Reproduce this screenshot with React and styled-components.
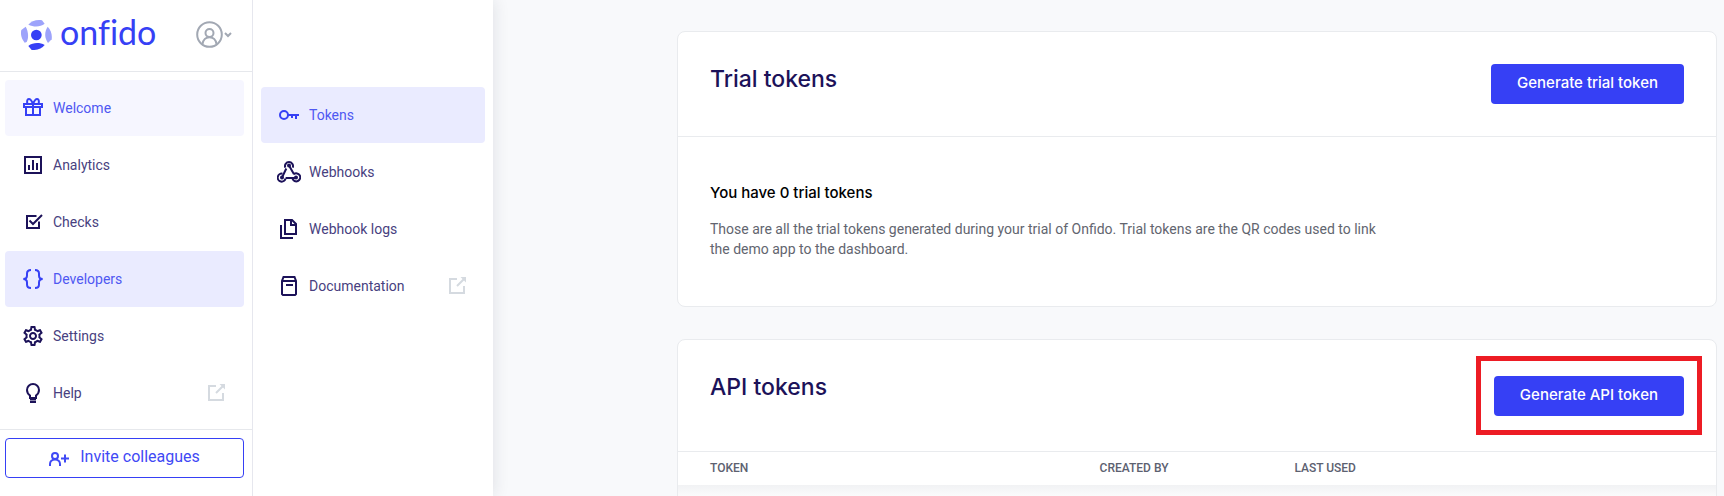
import React from 'react';
import styled, { createGlobalStyle, css } from 'styled-components';
import { MdOutlineSettings } from 'react-icons/md';

const GlobalStyle = createGlobalStyle`
  * {
    box-sizing: border-box;
  }

  body {
    margin: 0;
    background: #f8f9fb;
    color: #1c1259;
    font-family: Roboto, 'Liberation Sans', sans-serif;
    font-size: 14px;
  }
`;

const headingFont = css`
  font-family: Inter, 'Liberation Sans', sans-serif;
  font-weight: 500;
`;

const Layout = styled.div`
  display: flex;
  height: 100vh;
  overflow: hidden;
`;

const Sidebar = styled.aside`
  display: flex;
  flex-direction: column;
  flex: 0 0 253px;
  background: #fff;
  border-right: 1px solid #e6e7ee;
  z-index: 2;
`;

const SidebarTop = styled.header`
  display: flex;
  align-items: center;
  justify-content: space-between;
  height: 72px;
  padding: 0 20px 2px 21px;
  border-bottom: 1px solid #e6e8ec;
`;

const Brand = styled.a`
  display: flex;
  align-items: center;
  gap: 8px;
  color: #3640f5;
  text-decoration: none;
`;

const BrandName = styled.span`
  font-family: Lato, sans-serif;
  font-size: 34px;
  font-variant-ligatures: none;
  line-height: 40px;
  padding-bottom: 6px;
`;

const AccountButton = styled.button`
  display: flex;
  align-items: center;
  gap: 1px;
  padding: 0;
  border: 0;
  background: none;
  color: #a2a8b3;
  cursor: pointer;
`;

const Nav = styled.nav`
  display: flex;
  flex-direction: column;
  gap: 1px;
  padding: 8px 8px 8px 5px;
`;

const SubNav = styled(Nav)`
  flex: 0 0 240px;
  padding: 87px 8px 8px;
  background: #fff;
  box-shadow: 0 0 16px rgba(28, 30, 60, 0.12);
  z-index: 1;
`;

const NavLink = styled.a`
  display: flex;
  align-items: center;
  gap: 8px;
  height: 56px;
  padding: 0 15px 0 16px;
  border-radius: 4px;
  color: #483f80;
  text-decoration: none;

  svg {
    color: #1c1259;
  }

  ${({ $tone }) =>
    $tone &&
    css`
      color: #4f58f2;
      background: ${$tone === 'active' ? '#eaebff' : '#f6f6ff'};

      svg {
        color: #3640f5;
      }
    `}
`;

const NavLabel = styled.span`
  flex: 1;
  line-height: 20px;
`;

const Icon = styled.svg.attrs({
  width: 24,
  height: 24,
  viewBox: '0 0 24 24',
  fill: 'none',
  stroke: 'currentColor',
  strokeWidth: 2,
  'aria-hidden': true,
})`
  flex: none;

  ${NavLink} &.external {
    color: #d5dae0;
  }
`;

const SidebarBottom = styled.div`
  padding: 8px 8px 8px 5px;
  border-top: 1px solid #e6e8ec;
`;

const InviteButton = styled.button`
  display: flex;
  align-items: center;
  justify-content: center;
  gap: 11px;
  width: 100%;
  height: 40px;
  padding: 0 0 3px;
  border: 1px solid #3640f5;
  border-radius: 4px;
  background: #fff;
  color: #3f49f5;
  font: inherit;
  font-size: 16px;
  cursor: pointer;

  svg {
    margin-top: 4px;
  }
`;

const Main = styled.main`
  display: flex;
  flex: 1;
  flex-direction: column;
  gap: 32px;
  min-width: 0;
  padding: 31px 7px 0 184px;
`;

const Card = styled.section`
  flex: none;
  border: 1px solid #e9ebee;
  border-radius: 8px;
  background: #fff;
`;

const CardHead = styled.div`
  display: flex;
  align-items: flex-start;
  justify-content: space-between;
  padding: 32px;
  border-bottom: 1px solid #e9ebee;
`;

const CardTitle = styled.h2`
  ${headingFont}
  margin: 0;
  color: #1c1259;
  font-size: 23px;
  line-height: 30px;
`;

const PrimaryButton = styled.button`
  ${headingFont}
  height: 40px;
  padding: 0 26px 3px;
  border: 0;
  border-radius: 4px;
  background: #3640f5;
  color: #fff;
  font-size: 15px;
  cursor: pointer;
`;

const Highlight = styled.div`
  position: relative;
  padding: 4px 0 3px;

  &::after {
    content: '';
    position: absolute;
    inset: -16px -18px;
    border: 5px solid #ed1c24;
    pointer-events: none;
  }
`;

const CardBody = styled.div`
  padding: 44px 32px 47px;
`;

const BodyTitle = styled.h3`
  ${headingFont}
  margin: 0 0 14px;
  color: #000;
  font-size: 15px;
  line-height: 24px;
`;

const BodyText = styled.p`
  max-width: 680px;
  margin: 0;
  color: #62656f;
  line-height: 20px;
`;

const TableWrap = styled.div`
  padding: 0 32px;
`;

const Table = styled.table`
  width: 100%;
  table-layout: fixed;
  border-collapse: collapse;

  th {
    width: 20%;
    height: 33px;
    padding: 0 0 2px;
    color: #5c6170;
    font-size: 12px;
    font-weight: 500;
    text-align: left;
    text-transform: uppercase;
  }

  th:first-child,
  th:last-child {
    width: 40%;
  }
`;

const TableShade = styled.div`
  height: 160px;
  background: linear-gradient(#f1f2f4, #fff 16px);
`;

const LogoMark = () => (
  <svg width="31" height="30" viewBox="0 0 93 90" aria-hidden="true">
    <path d="M22 14C30 4 46-2 63 1L71 11C57 22 38 21 22 14Z" fill="#9da3fb" />
    <path d="M14 20C22 34 24 52 17 66L11 68C1 56-2 42 1 30Z" fill="#9da3fb" />
    <path d="M80 20C90 30 94 44 92 58L81 69C71 55 69 38 80 20Z" fill="#9da3fb" />
    <path d="M22 78C36 67 56 67 71 75C63 86 49 91 32 90Z" fill="#3640f5" />
    <circle cx="46" cy="45" r="16" fill="#3640f5" />
  </svg>
);

const AvatarIcon = () => (
  <svg width="27" height="27" viewBox="0 0 27 27" fill="none" stroke="currentColor" strokeWidth="2" aria-hidden="true">
    <circle cx="13.5" cy="13.5" r="12.3" />
    <circle cx="13.5" cy="12" r="4" />
    <path d="M6.500 23.200C7 18.800 10 16.300 13.500 16.300S20 18.800 20.500 23.200" />
  </svg>
);

const ChevronIcon = () => (
  <svg width="8" height="6" viewBox="0 0 8 6" fill="none" stroke="currentColor" strokeWidth="2" aria-hidden="true">
    <path d="M1 1 4 4 7 1" />
  </svg>
);

const GiftIcon = () => (
  <Icon>
    <path d="M3 8h18v3H3zM5 11v8h14v-8M12 8v11" />
    <path d="M12 8C10.500 4 9 3 7.800 3 6.300 3 5.800 4.500 6.300 8M12 8C13.500 4 15 3 16.200 3 17.700 3 18.200 4.500 17.700 8" />
  </Icon>
);

const AnalyticsIcon = () => (
  <Icon>
    <rect x="4" y="4" width="16" height="16" />
    <path d="M8 12v5M12 7v10M16 10v7" />
  </Icon>
);

const ChecksIcon = () => (
  <Icon>
    <path d="M15.500 6H6v12h12v-6.500" />
    <path d="M8.500 10.500 12 14 21 5" />
  </Icon>
);

const BracesIcon = () => (
  <Icon>
    <path d="M10 3C7.500 3 6 4.200 6 6.500V8.500C6 10.500 4.800 12 2.300 12 4.800 12 6 13.500 6 15.500V17.500C6 19.800 7.500 21 10 21" />
    <path d="M14 3C16.500 3 18 4.200 18 6.500V8.500C18 10.500 19.200 12 21.700 12 19.200 12 18 13.500 18 15.500V17.500C18 19.800 16.500 21 14 21" />
  </Icon>
);

const BulbIcon = () => (
  <Icon>
    <path d="M9 17V14.500C7.200 13.200 6 11.200 6 9A6 6 0 0 1 18 9C18 11.200 16.800 13.200 15 14.500V17Z" />
    <path d="M9 18.500h6M9 21h6" />
  </Icon>
);

const ExternalIcon = () => (
  <Icon className="external">
    <path d="M11 5H4v14h14v-7M11 12l7.500-7.500" />
    <path d="M14.500 3H20v5.500Z" fill="currentColor" stroke="none" />
  </Icon>
);

const KeyIcon = () => (
  <Icon>
    <circle cx="7" cy="12" r="4" />
    <path d="M11 12h11M15 12v3M19 12v4" />
  </Icon>
);

const WebhookIcon = () => (
  <Icon>
    <path d="M8.300 7.600A4 4 0 1 1 15.700 7.600M5.500 13.700A4 4 0 1 0 8.600 18.500M15.400 18.500A4 4 0 1 0 16.800 14.200" />
    <path d="M5 17.500 9.300 8.500M12 5.500 17 14.300M8.600 18h10.400" />
    <circle cx="12" cy="5.5" r="1" />
    <circle cx="5" cy="17.5" r="1" />
    <circle cx="19" cy="17.5" r="1" />
  </Icon>
);

const LogsIcon = () => (
  <Icon>
    <path d="M8 3h7l4 4v10H8zM4 8v13h12" />
    <path d="M14 3v5h5" />
  </Icon>
);

const DocsIcon = () => (
  <Icon>
    <path d="M5 7V20L6 21H18L19 20V7L17.500 3H6.500ZM5 7h14M9 11h7" />
  </Icon>
);

const InviteIcon = () => (
  <svg width="20" height="14" viewBox="0 0 20 14" fill="none" stroke="currentColor" strokeWidth="2" aria-hidden="true">
    <circle cx="6" cy="4" r="3" />
    <path d="M1 14V12C1 9.500 3 7.500 6 7.500S11 9.500 11 12V14M12 6.500h8M16 2.500v8" />
  </svg>
);

const MAIN_LINKS = [
  { label: 'Welcome', icon: GiftIcon, tone: 'soft' },
  { label: 'Analytics', icon: AnalyticsIcon },
  { label: 'Checks', icon: ChecksIcon },
  { label: 'Developers', icon: BracesIcon, tone: 'active' },
  { label: 'Settings', icon: () => <MdOutlineSettings size={24} /> },
  { label: 'Help', icon: BulbIcon, external: true },
];

const DEVELOPER_LINKS = [
  { label: 'Tokens', icon: KeyIcon, tone: 'active' },
  { label: 'Webhooks', icon: WebhookIcon },
  { label: 'Webhook logs', icon: LogsIcon },
  { label: 'Documentation', icon: DocsIcon, external: true },
];

const NavItems = ({ links }) =>
  links.map(({ label, icon: LinkIcon, tone, external }) => (
    <NavLink key={label} href="#" $tone={tone}>
      <LinkIcon />
      <NavLabel>{label}</NavLabel>
      {external && <ExternalIcon />}
    </NavLink>
  ));

const App = () => (
  <>
    <GlobalStyle />
    <Layout>
      <Sidebar>
        <SidebarTop>
          <Brand href="#">
            <LogoMark />
            <BrandName>onfido</BrandName>
          </Brand>
          <AccountButton aria-label="Account">
            <AvatarIcon />
            <ChevronIcon />
          </AccountButton>
        </SidebarTop>
        <Nav>
          <NavItems links={MAIN_LINKS} />
        </Nav>
        <SidebarBottom>
          <InviteButton>
            <InviteIcon />
            Invite colleagues
          </InviteButton>
        </SidebarBottom>
      </Sidebar>

      <SubNav>
        <NavItems links={DEVELOPER_LINKS} />
      </SubNav>

      <Main>
        <Card>
          <CardHead>
            <CardTitle>Trial tokens</CardTitle>
            <PrimaryButton>Generate trial token</PrimaryButton>
          </CardHead>
          <CardBody>
            <BodyTitle>You have 0 trial tokens</BodyTitle>
            <BodyText>
              Those are all the trial tokens generated during your trial of Onfido. Trial tokens are
              the QR codes used to link the demo app to the dashboard.
            </BodyText>
          </CardBody>
        </Card>

        <Card>
          <CardHead>
            <CardTitle>API tokens</CardTitle>
            <Highlight>
              <PrimaryButton>Generate API token</PrimaryButton>
            </Highlight>
          </CardHead>
          <TableWrap>
            <Table>
              <thead>
                <tr>
                  <th>Token</th>
                  <th>Created by</th>
                  <th>Last used</th>
                </tr>
              </thead>
            </Table>
          </TableWrap>
          <TableShade />
        </Card>
      </Main>
    </Layout>
  </>
);

export default App;
